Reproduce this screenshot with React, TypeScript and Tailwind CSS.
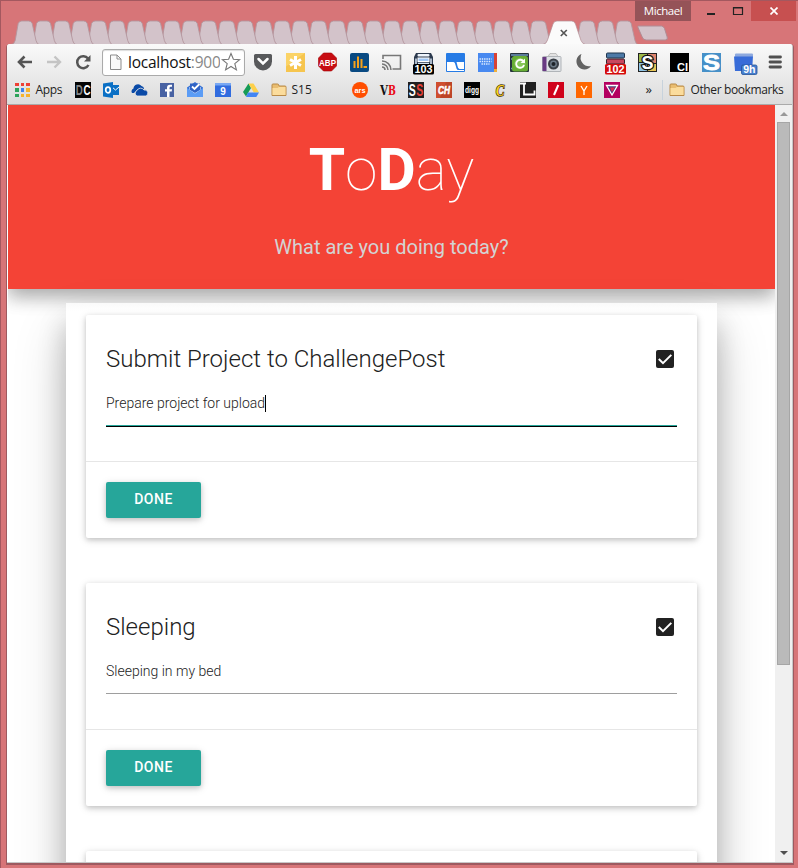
import type { ReactNode } from 'react';

const TAB_PITCH = 18.34;
const leftTabs = Array.from({ length: 29 }, (_, i) => 25 + i * TAB_PITCH).reverse();
const rightTabs = [624, 605.5, 587];

function tabPath(c: number) {
  return `M${c - 14} 44.5 q3 0 4.200 -4 L${c - 6.8} 23.5 q1 -2.500 3.500 -2.500 h7 q2.500 0 3.500 2.500 L${c + 11} 40.500 q1.200 4 3 4 z`;
}

function TabStrip() {
  return (
    <svg className="col-start-1 row-start-1" width="798" height="45" viewBox="0 0 798 45">
      {leftTabs.map((c) => (
        <path key={c} d={tabPath(c)} fill="#d3c3ca" stroke="#b3969e" strokeWidth="0.900" />
      ))}
      {rightTabs.map((c) => (
        <path key={c} d={tabPath(c)} fill="#d3c3ca" stroke="#b3969e" strokeWidth="0.900" />
      ))}
      <path d="M638.500 26 h23 q2 0 3 2.500 l2.700 8.500 q1 3 -2 3 h-19 q-3 0 -4 -3 l-4 -9 q-1 -2 0.300 -2z" fill="#d3c3ca" stroke="#b08c94" />
      <path d="M8 44.500 H636 M583 44.500 H790" stroke="#a77f86" fill="none" />
      <path d="M543 45 q3.500 -1 4.500 -4.500 L553 24 q1 -3 4 -3 h14.500 q3 0 4 3 L581 40.500 q1.500 3.500 4.500 4.500z" fill="#fbfbfb" />
      <path d="M543 44.500 q3.500 -1 4.500 -4.500 L553 24 q1 -3 4 -3 h14.500 q3 0 4 3 L581 40.500 q1.500 3.500 4.500 4" fill="none" stroke="#b58f96" strokeWidth="0.700" />
      <path d="M560.800 30 l6 6 M566.800 30 l-6 6" stroke="#555" strokeWidth="1.700" />
    </svg>
  );
}

function Ico({ children, w = 20, h = 24 }: { children: ReactNode; w?: number; h?: number }) {
  return (
    <svg className="shrink-0 overflow-visible" width={w} height={h} viewBox={`0 ${h === 24 ? -0.5 : 0} ${w} ${h}`}>
      {children}
    </svg>
  );
}

function T({ x, y, s, f = '#fff', w = 700, l, font = 'Liberation Sans, sans-serif', children }: { x: number; y: number; s: number; f?: string; w?: number; l?: number; font?: string; children: ReactNode }) {
  return (
    <text x={x} y={y} fontSize={s} fill={f} fontWeight={w} textAnchor="middle" fontFamily={font} textLength={l} lengthAdjust="spacingAndGlyphs">
      {children}
    </text>
  );
}

function Folder() {
  return (
    <Ico w={16} h={16}>
      <path d="M1 13.500 V3 q0 -1 1 -1 h4.500 q1 0 1.200 1 l.3 1 h6 q1 0 1 1 v8.500 z" fill="#e9bd70" stroke="#b98a47" />
      <path d="M1.500 13 V6 h5 l1.500 -1 h6.500 v8z" fill="#fbdc9c" />
    </Ico>
  );
}

function Extensions() {
  return (
    <div className="ml-[8px] flex gap-3">
      <Ico>
        <path d="M1 5 q0 -1.500 1.500 -1.500 h15 q1.500 0 1.500 1.500 v6 a9 9 0 0 1 -18 0z" fill="#58595b" />
        <path d="M5.500 8.500 l4.500 4.500 4.500 -4.500" stroke="#fff" strokeWidth="2.500" fill="none" strokeLinecap="round" />
      </Ico>
      <Ico>
        <rect x="1" y="2.500" width="19" height="19" fill="#f6c54e" />
        <path d="M1 2.500 h19 L1 16z" fill="#fbd366" />
        <path d="M10.500 5.500 v13 M5 9 l11 6 M16 9 l-11 6" stroke="#fff" strokeWidth="3" />
      </Ico>
      <Ico>
        <path d="M6.500 2.500 h8 l5 5 v8 l-5 5 h-8 l-5 -5 v-8z" fill="#c70d13" stroke="#a20000" strokeWidth=".600" />
        <T x={10.500} y={15.200} s={9.500} l={17}>ABP</T>
      </Ico>
      <Ico>
        <rect x="1" y="2.500" width="19" height="19" rx="2" fill="#094a82" />
        <path d="M5.500 17.500 v-7 M9 17.500 V6 M12.500 17.500 v-9 M14.500 16.500 h3.500" stroke="#f7a11b" strokeWidth="2" />
      </Ico>
      <Ico>
        <path d="M2 8.500 V5 h17.500 v13.500 h-8" fill="none" stroke="#777" strokeWidth="1.600" />
        <path d="M1 16.500 a3 3 0 0 1 3 3 M1 13.500 a6 6 0 0 1 6 6 M1 10.500 a9 9 0 0 1 9 9" fill="none" stroke="#777" strokeWidth="1.500" />
      </Ico>
      <Ico>
        <path d="M3 2.500 h15 l2 4 v10 h-19 v-10z" fill="#2c3a4e" />
        <rect x="4.500" y="3.500" width="12" height="2.500" rx="1" fill="#eff5fc" />
        <rect x="5" y="7.500" width="11" height="3.500" fill="#9fc6f5" stroke="#fff" />
        <path d="M3 8 v7 M18 8 v7 M5 13 h11" stroke="#d7e4f3" strokeWidth="1.500" />
        <rect x="0" y="13.500" width="21" height="10.500" rx="1.500" fill="#000" />
        <T x={10.500} y={22.500} s={10.500} l={18}>103</T>
      </Ico>
      <Ico>
        <rect x="1" y="2.500" width="19" height="19" rx="1" fill="#267be5" />
        <path d="M2 11.500 h6.500 q1.500 0 2 3 l1 3.500 q.5 1.500 2 1.500 h5.500 v1 h-17z M11.500 11.500 h7.500 v7 h-4.500 q-1.500 0 -2 -3z" fill="#fff" />
      </Ico>
      <Ico>
        <rect x="1" y="2.500" width="16" height="19" fill="#4889f0" />
        <path d="M17 2.500 h3 v16 h-3z" fill="#d84235" />
        <path d="M17 18.500 h3 v3 h-3z" fill="#f0b03a" />
        <path d="M2.500 8.500 h12 M2.500 11 h12 M4.500 13.500 h8" stroke="#e3efff" strokeWidth="1.300" strokeDasharray="1.400 .900" />
      </Ico>
      <Ico>
        <rect x="1" y="2.500" width="19" height="19" rx="1" fill="#26323c" />
        <path d="M2 4.500 h17 M2 8.500 h17 M2 18 h17" stroke="#6d96bb" strokeWidth="1.500" />
        <rect x="3" y="5.500" width="16" height="15.500" rx="2.500" fill="#67ad35" />
        <circle cx="11" cy="13" r="5.500" fill="#86c65a" />
        <path d="M14.500 11 a4 4 0 1 0 0.500 3.500" fill="none" stroke="#fff" strokeWidth="1.800" />
        <path d="M16 8 v4.500 h-4.500z" fill="#fff" />
      </Ico>
      <Ico>
        <path d="M7 6 l2 -3 h6 l2 3z" fill="#e2e2e2" stroke="#aaa" strokeWidth=".700" />
        <rect x="1.500" y="6" width="18.500" height="15" rx="1" fill="#dfe2e5" stroke="#b0b4b8" />
        <path d="M1.500 6.500 h4 v14 h-4z" fill="#693a83" />
        <circle cx="12.500" cy="13.500" r="5.500" fill="#393f46" />
        <circle cx="12.500" cy="13.500" r="3.400" fill="#6d7b88" />
        <circle cx="12.500" cy="13.500" r="2" fill="#1c2228" />
      </Ico>
      <Ico>
        <path d="M8.500 3.500 A8 8 0 1 0 18 15.500 A8.500 8.500 0 0 1 8.500 3.500z" fill="#626262" />
      </Ico>
      <Ico>
        <rect x="1.500" y="2.500" width="18" height="5" rx="1" fill="#4d7aa7" stroke="#21364f" />
        <rect x="1.500" y="8.500" width="18" height="5" rx="1" fill="#c9475d" stroke="#38242f" />
        <rect x="0" y="13.500" width="21" height="10.500" rx="1.500" fill="#d50a0a" />
        <T x={10.500} y={22.500} s={10.500} l={18}>102</T>
      </Ico>
      <Ico>
        <rect x="1" y="2.500" width="19" height="19" fill="#222" />
        <path d="M2 3.500 h8 v8 h-8z" fill="#9cb94c" />
        <path d="M11 3.500 h8 v9 h-8z" fill="#df836c" />
        <path d="M2 12.500 h8 v8 h-8z" fill="#8fc4e6" />
        <path d="M11 13.500 h8 v7 h-8z" fill="#e8c555" />
        <text x="10.500" y="18.500" textAnchor="middle" fontSize="18" fontWeight="700" fontFamily="Liberation Sans" fill="#fff" stroke="#111" strokeWidth="2.500" paintOrder="stroke">S</text>
      </Ico>
      <Ico>
        <rect x="1" y="2.500" width="19" height="19" fill="#000" />
        <T x={13.500} y={20.500} s={11.500} l={11}>CI</T>
      </Ico>
      <Ico>
        <rect x="1" y="2.500" width="19" height="19" fill="#4690c8" />
        <text x="10.500" y="19.800" textAnchor="middle" fontSize="22" fontWeight="700" fontFamily="Liberation Sans" fill="#fff" stroke="#fff" strokeWidth=".800" textLength="17" lengthAdjust="spacingAndGlyphs">S</text>
      </Ico>
      <Ico>
        <rect x="2" y="3" width="18" height="4" rx="1" fill="#8ea9de" />
        <path d="M1 6 h19 l-1 14.500 h-17z" fill="#386cd8" />
        <rect x="8.500" y="14.500" width="15.500" height="9.500" rx="1.500" fill="#477fce" stroke="#225399" strokeWidth=".800" />
        <T x={16.300} y={22.800} s={10.500}>9h</T>
      </Ico>
      <Ico>
        <path d="M5 6.500 h10.500 M5 11.500 h10.500 M5 16.500 h10.500" stroke="#505050" strokeWidth="2.800" strokeLinecap="round" />
      </Ico>
    </div>
  );
}

function Toolbar() {
  return (
    <div className="flex h-[34px] items-center pl-[10px]">
      <Ico w={16} h={16}>
        <path d="M15 8 H2 M7.500 2.500 L2 8 l5.500 5.500" fill="none" stroke="#555" strokeWidth="2.600" />
      </Ico>
      <div className="ml-[13px] flex">
        <Ico w={16} h={16}>
          <path d="M1 8 H14 M8.500 2.500 L14 8 l-5.500 5.500" fill="none" stroke="#c4c4c4" strokeWidth="2.400" />
        </Ico>
      </div>
      <div className="ml-[13px] flex">
        <Ico w={16} h={16}>
          <path d="M13 4.500 A6 6 0 1 0 13.500 11" fill="none" stroke="#555" strokeWidth="2.500" />
          <path d="M15.500 1 v6.500 H9z" fill="#555" />
        </Ico>
      </div>
      <div className="ml-[11px] flex h-[27px] w-[143px] items-center rounded-[3px] border border-[#aaa] bg-white pl-[6px] shadow-[inset_0_1px_1px_#ddd]">
        <Ico w={13} h={16}>
          <path d="M1.500 1 h6.500 l4 4 v10.500 h-10.500z M8 1 v4 h4" fill="#fafafa" stroke="#8b8b8b" />
        </Ico>
        <div className="ml-[6px] w-[92px] overflow-hidden font-['Open_Sans',sans-serif] text-[15.500px] leading-[24px] tracking-[-0.230px] whitespace-nowrap text-[#111]">
          localhost<span className="text-[#888]">:900</span>
        </div>
        <Ico w={20} h={20}>
          <path d="M11 1.500 l2.400 5.800 6.200 .4 -4.800 4 1.600 6.200 -5.400 -3.400 -5.400 3.400 1.600 -6.200 -4.800 -4 6.200 -.4z" fill="#fff" stroke="#777" strokeWidth="1.100" />
        </Ico>
      </div>
      <Extensions />
    </div>
  );
}

const appsColors = ['#ee4035', '#ee4035', '#ee4035', '#2ea35a', '#3c82ee', '#f6b32b', '#2ea35a', '#f6b32b', '#f6b32b'];

function Bookmarks() {
  return (
    <div className="flex h-[22px] items-center pl-[8px] font-['Open_Sans',sans-serif] text-[12px] text-[#222]">
      <div className="grid grid-cols-3 gap-[2px]">
        {appsColors.map((c, i) => (
          <i key={i} className="size-[3.500px]" style={{ background: c }} />
        ))}
      </div>
      <span className="ml-[6px] w-[39px] tracking-[-0.300px]">Apps</span>
      <div className="flex gap-3">
        <Ico w={16} h={16}>
          <rect width="16" height="16" fill="#050505" />
          <T x={4.200} y={13} s={14} f="#888" l={7}>D</T>
          <T x={11.900} y={13} s={14} l={7}>C</T>
        </Ico>
        <Ico w={16} h={16}>
          <path d="M9 3 h7 v10 h-7z" fill="#0b70c5" />
          <path d="M9 5 l3.500 3 3.500 -3" fill="none" stroke="#fff" />
          <path d="M0 1.500 L10 0 v16 L0 14.500z" fill="#0b70c5" />
          <ellipse cx="5" cy="8" rx="2.300" ry="2.800" fill="none" stroke="#fff" strokeWidth="1.700" />
        </Ico>
        <Ico w={16} h={16}>
          <path d="M1 11 a3 3 0 0 1 1.500 -4.500 a4.500 4.500 0 0 1 8 -2.500 a3 3 0 0 1 2.500 3 h-6 l-4 4z" fill="#0a4aa7" />
          <path d="M6 14 a3 3 0 0 1 0 -5.500 a4 4 0 0 1 7 -.5 a3 3 0 0 1 1.500 6z" fill="#0a4aa7" stroke="#e9e9e9" strokeWidth=".800" />
        </Ico>
        <Ico w={16} h={16}>
          <rect x="1" y="1" width="14" height="14" fill="#4862a3" />
          <path d="M10.500 15 V9.500 h2.200 l.4 -2.300 h-2.600 V6 q0 -1.200 1.300 -1.200 h1.200 V2.700 h-2 q-3 0 -3 3 v1.500 H6 v2.300 h2 V15z" fill="#fff" />
        </Ico>
        <Ico w={16} h={16}>
          <path d="M0 5.500 L8 0 l8 5.500 v9.500 H0z" fill="#3772d4" />
          <path d="M2.500 5 h11 v4 l-5.500 3.500 -5.500 -3.500z" fill="#f3f6fb" />
          <path d="M3 1.500 h10 v6.500 l-5 3 -5 -3z" fill="#2f62c4" />
          <path d="M0 6 l8 5.500 8 -5.500 v9 H0z" fill="#5b9cf5" />
          <path d="M5 4.500 l2.500 2.500 5 -5" fill="none" stroke="#fff" strokeWidth="1.800" />
        </Ico>
        <Ico w={16} h={16}>
          <path d="M0 1 h16 v3 h-16z" fill="#79a8f3" />
          <path d="M0 3.500 h16 v11.500 h-16z" fill="#316cdf" />
          <T x={8} y={13} s={10}>9</T>
        </Ico>
        <Ico w={16} h={16}>
          <path d="M5.500 1.500 L8 6 3 14.500 0 10z" fill="#159b55" />
          <path d="M5.500 1.500 h5 l5.500 9 h-5.200z" fill="#fdd04b" />
          <path d="M5 10.500 h11 l-2.700 4.500 H3z" fill="#4285f4" />
        </Ico>
        <Folder />
      </div>
      <span className="ml-[5px] w-[60px]">S15</span>
      <div className="flex gap-3">
        <Ico w={16} h={16}>
          <circle cx="8" cy="8" r="8" fill="#ff4e00" />
          <T x={8} y={10.500} s={7.500} l={11}>ars</T>
        </Ico>
        <Ico w={16} h={16}>
          <T x={3.900} y={12.500} s={12} f="#111" l={7.900} font="DejaVu Serif">V</T>
          <T x={12} y={12.500} s={12} f="#e90914" l={7.900} font="DejaVu Serif">B</T>
        </Ico>
        <Ico w={16} h={16}>
          <rect width="16" height="16" fill="#202020" />
          <T x={4.300} y={14} s={17} l={7}>S</T>
          <T x={11.700} y={14} s={17} f="#e74137" l={7}>S</T>
        </Ico>
        <Ico w={16} h={16}>
          <rect width="16" height="16" fill="#cf4e2e" />
          <path d="M10 0 h6 v16 h-12z" fill="#bd4527" />
          <text x="8" y="12" textAnchor="middle" fontSize="11" fontWeight="700" fontStyle="italic" fontFamily="Liberation Sans" fill="#fff" stroke="#fff" strokeWidth=".600" textLength="12" lengthAdjust="spacingAndGlyphs">CH</text>
        </Ico>
        <Ico w={16} h={16}>
          <rect width="16" height="16" fill="#000" />
          <T x={8} y={10.500} s={9} l={14}>digg</T>
        </Ico>
        <Ico w={16} h={16}>
          <text x="8" y="14" textAnchor="middle" fontSize="17" fontWeight="700" fontStyle="italic" fontFamily="Liberation Serif" fill="#fccf17" stroke="#3d3415" strokeWidth="1.500" paintOrder="stroke" textLength="8.500" lengthAdjust="spacingAndGlyphs">C</text>
        </Ico>
        <Ico w={16} h={16}>
          <rect width="16" height="16" fill="#202020" />
          <path d="M0 1.500 h6 M4 1 v11.500 h10.500 v-4" fill="none" stroke="#fff" strokeWidth="1.800" />
        </Ico>
        <Ico w={16} h={16}>
          <rect width="16" height="16" fill="#d0021b" />
          <path d="M10.300 3 L6 13" stroke="#fff" strokeWidth="2" />
        </Ico>
        <Ico w={16} h={16}>
          <rect width="16" height="16" fill="#ff6600" />
          <path d="M5 4 l3 5 3 -5 M8 9 v4" stroke="#fff" strokeWidth="1.300" fill="none" />
        </Ico>
        <Ico w={16} h={16}>
          <rect width="16" height="16" fill="#b40060" />
          <path d="M2.500 3.500 h11 L8 13z" fill="#493c81" stroke="#fff" strokeWidth="1.300" />
          <path d="M6 5.500 h5 L8 10z" fill="#dd274e" />
        </Ico>
      </div>
      <span className="ml-[26px] w-[16px] text-[13px]">»</span>
      <span className="mr-[6px] h-5 w-px shrink-0 bg-[#c7d2dc]" />
      <Folder />
      <span className="ml-[6px] text-[12px] tracking-[-0.380px] whitespace-nowrap">Other bookmarks</span>
    </div>
  );
}

function Card({ title, text, focused = false }: { title: string; text: string; focused?: boolean }) {
  return (
    <article className="h-[223px] shrink-0 rounded-[2px] bg-white shadow-[0_2px_5px_0_rgba(0,0,0,0.16),0_2px_10px_0_rgba(0,0,0,0.12)]">
      {title && (
        <>
          <div className="h-[146px] px-5 pt-5">
            <div className="flex h-12 items-center justify-between">
              <h2 className="text-[24px] leading-[48px] font-light text-[#212121]">{title}</h2>
              <svg className="mr-[3px]" width="18" height="18" viewBox="0 0 18 18">
                <rect width="18" height="18" rx="2" fill="#212121" />
                <path d="M2.800 9 L7 13.200 15.300 4.900" fill="none" stroke="#fff" strokeWidth="2" />
              </svg>
            </div>
            <div className={focused ? 'flex h-[43px] items-center border-b border-[#26a69a] pb-[2px] shadow-[0_1px_0_0_#000]' : 'flex h-[43px] items-center border-b border-[#9e9e9e] pb-[2px]'}>
              <span className="text-[14px] leading-5 font-light text-[#222]">{text}</span>
              {focused && <i className="h-[17px] w-px bg-black" />}
            </div>
          </div>
          <div className="border-t border-[#e6e6e6] px-5 pt-5">
            <button className="block h-9 w-[95px] rounded-[2px] bg-[#26a69a] pb-px text-[14px] font-medium tracking-[0.500px] text-white shadow-[0_2px_5px_0_rgba(0,0,0,0.16),0_2px_10px_0_rgba(0,0,0,0.12)]">DONE</button>
          </div>
        </>
      )}
    </article>
  );
}

export default function App() {
  return (
    <div className="flex h-[868px] w-[798px] flex-col overflow-hidden bg-[#d77578] font-[Roboto,sans-serif] shadow-[inset_1px_1px_0_#a4585f]">
      <div className="grid h-[44px] shrink-0">
        <TabStrip />
        <div className="col-start-1 row-start-1 flex h-[21px] items-stretch justify-end pt-px pr-[2px]">
          <div className="mr-[16px] flex w-14 items-center justify-center bg-[#955358] font-['Open_Sans',sans-serif] text-[11.500px] tracking-[-0.450px] text-white">Michael</div>
          <svg width="44" height="20" viewBox="0 0 44 20">
            <path d="M0 13 h8" stroke="#222" strokeWidth="2" />
            <path d="M26.500 6.500 h9 v7 h-9z M26.500 7 h9" fill="none" stroke="#222" strokeWidth="1.200" />
          </svg>
          <div className="flex w-[45px] items-center justify-center bg-[#c75050]">
            <svg width="8" height="8" viewBox="0 0 8 8">
              <path d="M.5 .5 l7 7 M7.500 .5 l-7 7" stroke="#fff" strokeWidth="1.700" />
            </svg>
          </div>
        </div>
      </div>
      <div className="z-10 ml-[7px] flex h-[819px] w-[786px] shrink-0 flex-col overflow-hidden rounded-t-[3px] border-r border-b border-[#c7c7c7] bg-white shadow-[0_1px_0_1px_#9e5a60]">
        <div className="h-[61px] shrink-0 border-b border-[#aaa] bg-linear-to-b from-[#fafafa] to-[#dcdcdc] pt-px">
          <Toolbar />
          <Bookmarks />
        </div>
        <div className="flex min-h-0 flex-1 pl-px">
          <main className="flex w-[767px] shrink-0 flex-col overflow-hidden bg-white">
            <header className="z-0 h-[184px] shrink-0 bg-[#f44336] text-center shadow-[0_8px_17px_0_rgba(0,0,0,0.2),0_6px_20px_0_rgba(0,0,0,0.19)]">
              <h1 className="pt-[35px] text-[58.800px] leading-[60px] font-thin text-white">
                <b className="font-bold">T</b>o<b className="font-bold">D</b>ay
              </h1>
              <p className="pt-[32px] text-[20px] leading-[30px] text-[#d3d3d3]">What are you doing today?</p>
            </header>
            <section className="z-10 mt-[14px] ml-[58px] flex h-[1000px] w-[651px] shrink-0 flex-col gap-[45px] bg-linear-to-b from-[#fafafa] to-white to-[8px] px-5 pt-3 shadow-[0_20px_26px_0_rgba(0,0,0,0.22),0_28px_50px_0_rgba(0,0,0,0.19)]">
              <Card title="Submit Project to ChallengePost" text="Prepare project for upload" focused />
              <Card title="Sleeping" text="Sleeping in my bed" />
              <Card title="" text="" />
            </section>
          </main>
          <div className="flex w-[17px] flex-col items-center bg-[#f0f0f0] pt-[7px] pb-[7px]">
            <svg className="shrink-0" width="8" height="4" viewBox="0 0 8 4">
              <path d="M4 0 L8 4 H0z" fill="#999" />
            </svg>
            <div className="mt-[6px] h-[543px] w-[13px] shrink-0 border border-[#a6a6a6] bg-[#bababa]" />
            <svg className="mt-auto shrink-0" width="8" height="4" viewBox="0 0 8 4">
              <path d="M0 0 H8 L4 4z" fill="#505050" />
            </svg>
          </div>
        </div>
      </div>
    </div>
  );
}
